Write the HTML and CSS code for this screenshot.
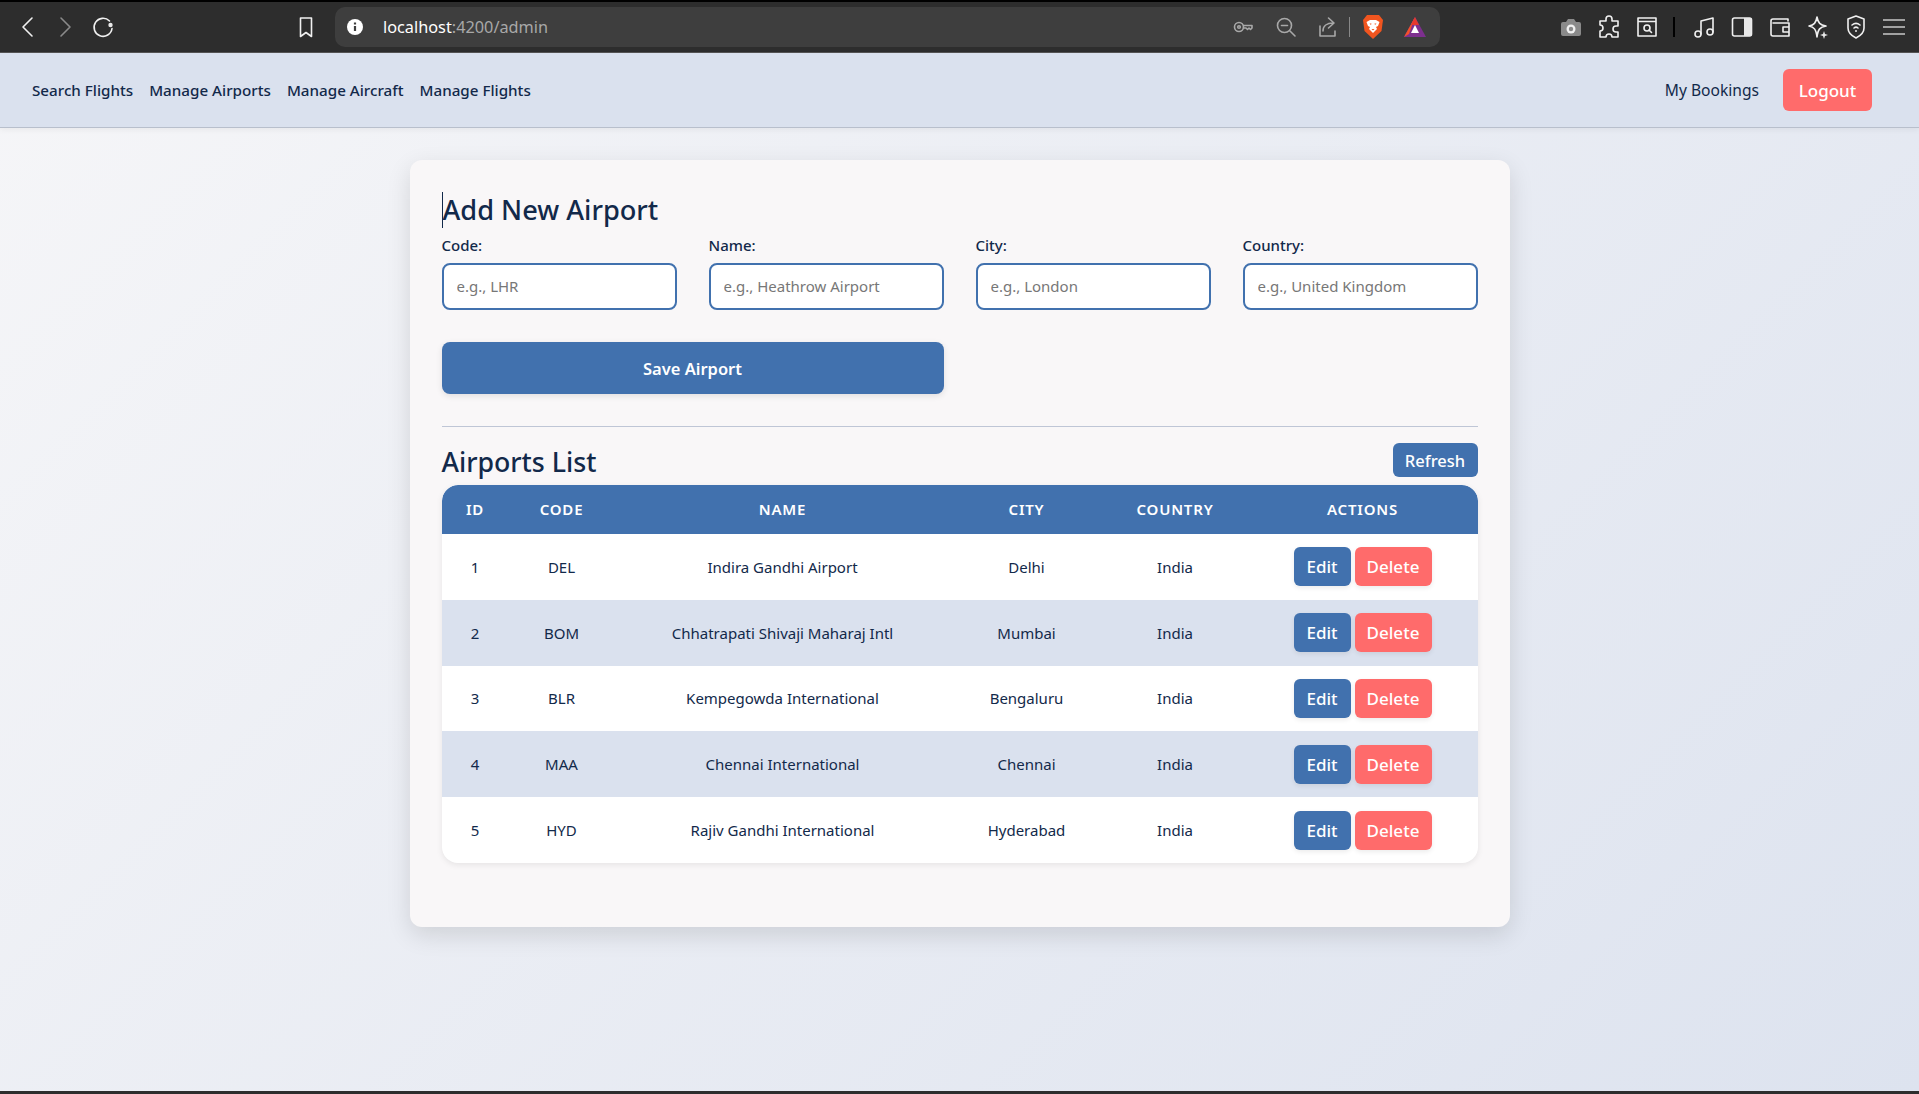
FILE: index.html
```html
<!DOCTYPE html>
<html lang="en">

<head>
    <meta charset="UTF-8">
    <meta name="viewport" content="width=device-width, initial-scale=1.0">
    <title>Admin</title>
    <link rel="stylesheet" href="styles.css">
</head>

<body>
    <div class="browser-bar">
        <div class="browser-nav">
            <svg class="icon" width="20" height="24" viewBox="0 0 20 24"><path d="M14 3 5 12l9 9" /></svg>
            <svg class="icon dim" width="20" height="24" viewBox="0 0 20 24"><path d="M6 3l9 9-9 9" /></svg>
            <svg class="icon" width="22" height="24" viewBox="0 0 22 24"><path d="M17.500 6A9 9 0 1 0 20 13.500" /><circle class="solid" cx="18.500" cy="10" r="2.200" /></svg>
        </div>
        <svg class="icon bookmark" width="20" height="24" viewBox="0 0 20 24"><path d="M4.500 3h11v18.500L10 17.500l-5.500 4z" /></svg>
        <div class="url-bar">
            <svg class="info-icon" width="18" height="18" viewBox="0 0 18 18"><circle cx="9" cy="9" r="8" fill="#fff" /><path d="M9 8v5M9 4.500v2" stroke="#3e3e3e" stroke-width="2.200" /></svg>
            <span class="url-host">localhost</span><span class="url-rest">:4200/admin</span>
            <div class="url-icons">
                <svg class="icon gray key" width="20" height="16" viewBox="0 0 20 16"><circle cx="6" cy="8" r="4.500" /><circle cx="6" cy="8" r="1.300" /><path d="M10.500 6.500H19V9l-1.500 1.500L16 9l-1.500 1.500L13 9h-2.500" /></svg>
                <svg class="icon gray" width="22" height="22" viewBox="0 0 22 22"><circle cx="9.500" cy="9.500" r="7" /><path d="M6.500 9.500h6M15 15l5 5" /></svg>
                <svg class="icon gray" width="22" height="22" viewBox="0 0 22 22"><path d="M3 10v10h15v-5M6 15c0-5 4-8 10-8M11.500 2 17 7l-5.500 5" /></svg>
                <span class="url-sep"></span>
                <svg class="brave" width="22" height="26" viewBox="0 0 22 26"><path d="M5 1h12l4 5-1.500 11L11 25l-8.500-8L1 6z" fill="#f1551f" /><path d="M4.500 8 8 6h6l3.500 2-1.500 4-2 1 1 2-4 4-4-4 1-2-2-1z" fill="#fff" /><path d="M7.500 9.500h2l-.5 1.500zM14.500 9.500h-2l.5 1.500zM9.500 15h3L11 16.500z" fill="#f1551f" /></svg>
                <svg width="24" height="24" viewBox="0 0 24 24"><path d="M12 2 1 22h22z" fill="#7d2f8e" /><path d="M12 2 1 22l5-3z" fill="#f4502a" /><path d="M12 10l-4 8h8z" fill="#fff" /><path d="M12 2l-4 8h8z" fill="#e5382c" /></svg>
            </div>
        </div>
        <div class="toolbar">
            <svg width="22" height="20" viewBox="0 0 22 20"><path d="M3 5h3l2-3h6l2 3h3a2 2 0 0 1 2 2v10a2 2 0 0 1-2 2H3a2 2 0 0 1-2-2V7a2 2 0 0 1 2-2z" fill="#8a8a8a" /><circle cx="11" cy="12" r="4.500" fill="#f0f0f0" /><circle cx="11" cy="12" r="2.200" fill="#8a8a8a" /></svg>
            <svg class="icon" width="22" height="24" viewBox="0 0 22 24"><path d="M8 4a3 3 0 0 1 6 0v2h6v5h-2a3 3 0 0 0 0 6h2v5h-6a3 3 0 0 0-6 0H2v-6a3 3 0 0 0 0-6V6h6z" /></svg>
            <svg class="icon" width="22" height="24" viewBox="0 0 22 24"><path d="M2 3h18v18H2zM2 6.500h18" /><circle cx="11" cy="13" r="3" /><path d="M13 15l2.500 2.500" /></svg>
            <span class="toolbar-sep"></span>
            <svg class="icon" width="22" height="24" viewBox="0 0 22 24"><circle cx="5" cy="19" r="3" /><circle cx="17" cy="17" r="3" /><path d="M8 19V6l12-3v14" /></svg>
            <svg class="icon" width="22" height="22" viewBox="0 0 22 22"><rect x="1.500" y="2" width="19" height="18" rx="2" /><rect class="solid" x="13" y="2" width="7.500" height="18" /></svg>
            <svg class="icon" width="22" height="22" viewBox="0 0 22 22"><path d="M19 5V3H4a2 2 0 0 0-2 2v13a2 2 0 0 0 2 2h16V7H4M20 11h-6v5h6" /></svg>
            <svg class="icon" width="22" height="24" viewBox="0 0 22 24"><path d="M10 2c1 6 3 8 9 9-6 1-8 3-9 11-1-8-3-10-8-11 5-1 7-3 8-9z" /><path class="solid" d="M17 16l1 3 3 1-3 1-1 3-1-3-3-1 3-1z" /></svg>
            <svg class="icon" width="22" height="26" viewBox="0 0 22 26"><path d="M11 2l8 3v9c0 5-4 8-8 10-4-2-8-5-8-10V5z" /><path d="M7 11c2.500-2 5.500-2 8 0M9 14c1.200-1 2.800-1 4 0" /><circle class="solid" cx="11" cy="17" r="1" /></svg>
            <svg class="icon light" width="22" height="22" viewBox="0 0 22 22"><path d="M0 4h22M0 11h22M0 18h22" /></svg>
        </div>
    </div>

    <nav class="navbar">
        <a href="#">Search Flights</a>
        <a href="#">Manage Airports</a>
        <a href="#">Manage Aircraft</a>
        <a href="#">Manage Flights</a>
        <a href="#" class="bookings">My Bookings</a>
        <button class="logout">Logout</button>
    </nav>

    <div class="card">
        <h2 class="first-title">Add New Airport</h2>
        <div class="form-grid">
            <div class="field">
                <label for="code">Code:</label>
                <input type="text" id="code" placeholder="e.g., LHR">
            </div>
            <div class="field">
                <label for="name">Name:</label>
                <input type="text" id="name" placeholder="e.g., Heathrow Airport">
            </div>
            <div class="field">
                <label for="city">City:</label>
                <input type="text" id="city" placeholder="e.g., London">
            </div>
            <div class="field">
                <label for="country">Country:</label>
                <input type="text" id="country" placeholder="e.g., United Kingdom">
            </div>
        </div>
        <button class="save-button">Save Airport</button>
        <div class="separator"></div>
        <div class="list-header">
            <h2>Airports List</h2>
            <button class="refresh-button">Refresh</button>
        </div>
        <table class="airports">
            <colgroup>
                <col class="col-id">
                <col class="col-code">
                <col class="col-name">
                <col class="col-city">
                <col class="col-country">
                <col class="col-actions">
            </colgroup>
            <thead>
                <tr>
                    <th>ID</th>
                    <th>CODE</th>
                    <th>NAME</th>
                    <th>CITY</th>
                    <th>COUNTRY</th>
                    <th>ACTIONS</th>
                </tr>
            </thead>
            <tbody>
                <tr>
                    <td>1</td>
                    <td>DEL</td>
                    <td>Indira Gandhi Airport</td>
                    <td>Delhi</td>
                    <td>India</td>
                    <td><button class="edit-button">Edit</button><button class="delete-button">Delete</button></td>
                </tr>
                <tr>
                    <td>2</td>
                    <td>BOM</td>
                    <td>Chhatrapati Shivaji Maharaj Intl</td>
                    <td>Mumbai</td>
                    <td>India</td>
                    <td><button class="edit-button">Edit</button><button class="delete-button">Delete</button></td>
                </tr>
                <tr>
                    <td>3</td>
                    <td>BLR</td>
                    <td>Kempegowda International</td>
                    <td>Bengaluru</td>
                    <td>India</td>
                    <td><button class="edit-button">Edit</button><button class="delete-button">Delete</button></td>
                </tr>
                <tr>
                    <td>4</td>
                    <td>MAA</td>
                    <td>Chennai International</td>
                    <td>Chennai</td>
                    <td>India</td>
                    <td><button class="edit-button">Edit</button><button class="delete-button">Delete</button></td>
                </tr>
                <tr>
                    <td>5</td>
                    <td>HYD</td>
                    <td>Rajiv Gandhi International</td>
                    <td>Hyderabad</td>
                    <td>India</td>
                    <td><button class="edit-button">Edit</button><button class="delete-button">Delete</button></td>
                </tr>
            </tbody>
        </table>
    </div>
</body>

</html>
```

FILE: styles.css
```css
* {
    margin: 0;
    padding: 0;
    box-sizing: border-box;
    font-family: 'Noto Sans', 'Open Sans', sans-serif;
}

html,
body {
    height: 100%;
}

body {
    display: flex;
    flex-direction: column;
    background: linear-gradient(135deg, #f6f6f8, #dde3ef);
    border-bottom: 3px solid #2d2d2d;
    color: #12294a;
    overflow: hidden;
}

/* browser chrome */
.browser-bar {
    height: 53px;
    flex-shrink: 0;
    display: flex;
    align-items: center;
    background-color: #2d2d2d;
    border-top: 2px solid #000;
    border-bottom: 1px solid #555;
    padding-left: 18px;
}

.icon {
    fill: none;
    stroke: #f0f0f0;
    stroke-width: 1.600;
    stroke-linejoin: round;
    stroke-linecap: round;
    display: block;
}

.icon .solid {
    fill: #e8e8e8;
    stroke: none;
}

.icon.dim {
    stroke: #8a8a8a;
}

.icon.gray {
    stroke: #a8a8a8;
}

.icon.light {
    stroke: #c8c8c8;
}

.browser-nav {
    display: flex;
    align-items: center;
    gap: 17px;
}

.bookmark {
    margin-left: 182px;
}

.url-bar {
    width: 1105px;
    height: 40px;
    margin-left: 19px;
    background-color: #3e3e3e;
    border-radius: 10px;
    display: flex;
    align-items: center;
    padding-left: 11px;
    font-size: 16.300px;
}

.url-host {
    color: #fff;
    margin-left: 19px;
}

.url-rest {
    color: #a8a8a8;
}

.url-icons {
    margin-left: auto;
    margin-right: 13px;
    display: flex;
    align-items: center;
    gap: 20px;
}

.key {
    margin-right: 2px;
}

.brave {
    margin-right: -1px;
}

.url-sep {
    width: 1px;
    height: 20px;
    margin: 0 -8px 0 -10px;
    background-color: #888;
}

.toolbar {
    display: flex;
    align-items: center;
    gap: 16px;
    margin-left: 120px;
}

.toolbar-sep {
    width: 2px;
    height: 20px;
    margin: 0 2px 0 -1px;
    background-color: #000;
}

/* navbar */
.navbar {
    height: 75px;
    flex-shrink: 0;
    display: flex;
    align-items: center;
    gap: 16px;
    padding: 0 47px 0 32px;
    background-color: #dae1ee;
    border-bottom: 1px solid #b8bfcc;
    box-shadow: 0 2px 6px rgba(0, 0, 0, 0.05);
}

.navbar a {
    color: #12294a;
    text-decoration: none;
    font-size: 15.200px;
    font-weight: 500;
}

.navbar .bookings {
    margin-left: auto;
    margin-right: 8px;
    font-weight: 400;
    font-size: 15.600px;
}

.logout {
    width: 89px;
    height: 42px;
    background-color: #ff6b6b;
    color: #fff;
    border: none;
    border-radius: 6px;
    font-size: 17px;
    font-weight: 500;
}

/* main card */
.card {
    width: 1100px;
    margin: 32px auto 0;
    padding: 32px 32px 64px;
    background-color: #f9f7f8;
    border-radius: 12px;
    box-shadow: 0 8px 24px rgba(0, 0, 0, 0.12);
}

h2 {
    font-size: 26.700px;
    font-weight: 500;
    line-height: 37px;
    color: #12294a;
}

.first-title {
    font-size: 27.200px;
    border-left: 1px solid #12294a;
    line-height: 36px;
    margin-bottom: 6px;
}

.form-grid {
    display: grid;
    grid-template-columns: repeat(4, 1fr);
    gap: 32px;
}

.field label {
    display: block;
    font-size: 15px;
    font-weight: 500;
    line-height: 22px;
    margin-bottom: 7px;
}

.field input {
    width: 100%;
    height: 47px;
    padding: 0 13px 2px;
    border: 2px solid #4171ae;
    border-radius: 8px;
    background-color: #fff;
    font-size: 15px;
}

.field input::placeholder {
    color: #777;
}

.save-button {
    display: block;
    width: 502px;
    height: 52px;
    margin-top: 32px;
    background-color: #4171ae;
    color: #fff;
    border: none;
    border-radius: 8px;
    font-size: 16.500px;
    font-weight: 600;
    box-shadow: 0 2px 6px rgba(0, 0, 0, 0.1);
}

.separator {
    height: 1px;
    margin: 32px 0 16px;
    background-color: #bfc6d6;
}

.list-header {
    display: flex;
    align-items: flex-start;
    justify-content: space-between;
    height: 42px;
}

.refresh-button {
    width: 85px;
    height: 34px;
    background-color: #4171ae;
    color: #fff;
    border: none;
    border-radius: 6px;
    font-size: 16.500px;
    font-weight: 500;
}

/* airports table */
.airports {
    width: 100%;
    table-layout: fixed;
    border-collapse: separate;
    border-spacing: 0;
    background-color: #fff;
    border-radius: 16px;
    box-shadow: 0 2px 6px rgba(0, 0, 0, 0.08);
    overflow: hidden;
}

.col-id { width: 67px; }
.col-code { width: 106px; }
.col-name { width: 336px; }
.col-city { width: 152px; }
.col-country { width: 145px; }
.col-actions { width: 230px; }

.airports th {
    height: 49px;
    padding-bottom: 2px;
    background-color: #4171ae;
    color: #fff;
    font-size: 15px;
    font-weight: 600;
    letter-spacing: 0.800px;
    text-align: center;
}

.airports th:first-child { border-top-left-radius: 16px; }
.airports th:last-child { border-top-right-radius: 16px; }

.airports td {
    height: 65.800px;
    text-align: center;
    font-size: 15px;
}

.airports tbody tr:nth-child(even) {
    background-color: #dae1ee;
}

.airports tbody tr:last-child td:first-child { border-bottom-left-radius: 16px; }
.airports tbody tr:last-child td:last-child { border-bottom-right-radius: 16px; }

.edit-button,
.delete-button {
    height: 39px;
    color: #fff;
    border: none;
    border-radius: 6px;
    font-size: 17px;
    font-weight: 500;
    box-shadow: 0 2px 5px rgba(0, 0, 0, 0.08);
}

.edit-button {
    width: 57px;
    margin-right: 4px;
    background-color: #4171ae;
}

.delete-button {
    width: 77px;
    background-color: #ff6b6b;
}
```
